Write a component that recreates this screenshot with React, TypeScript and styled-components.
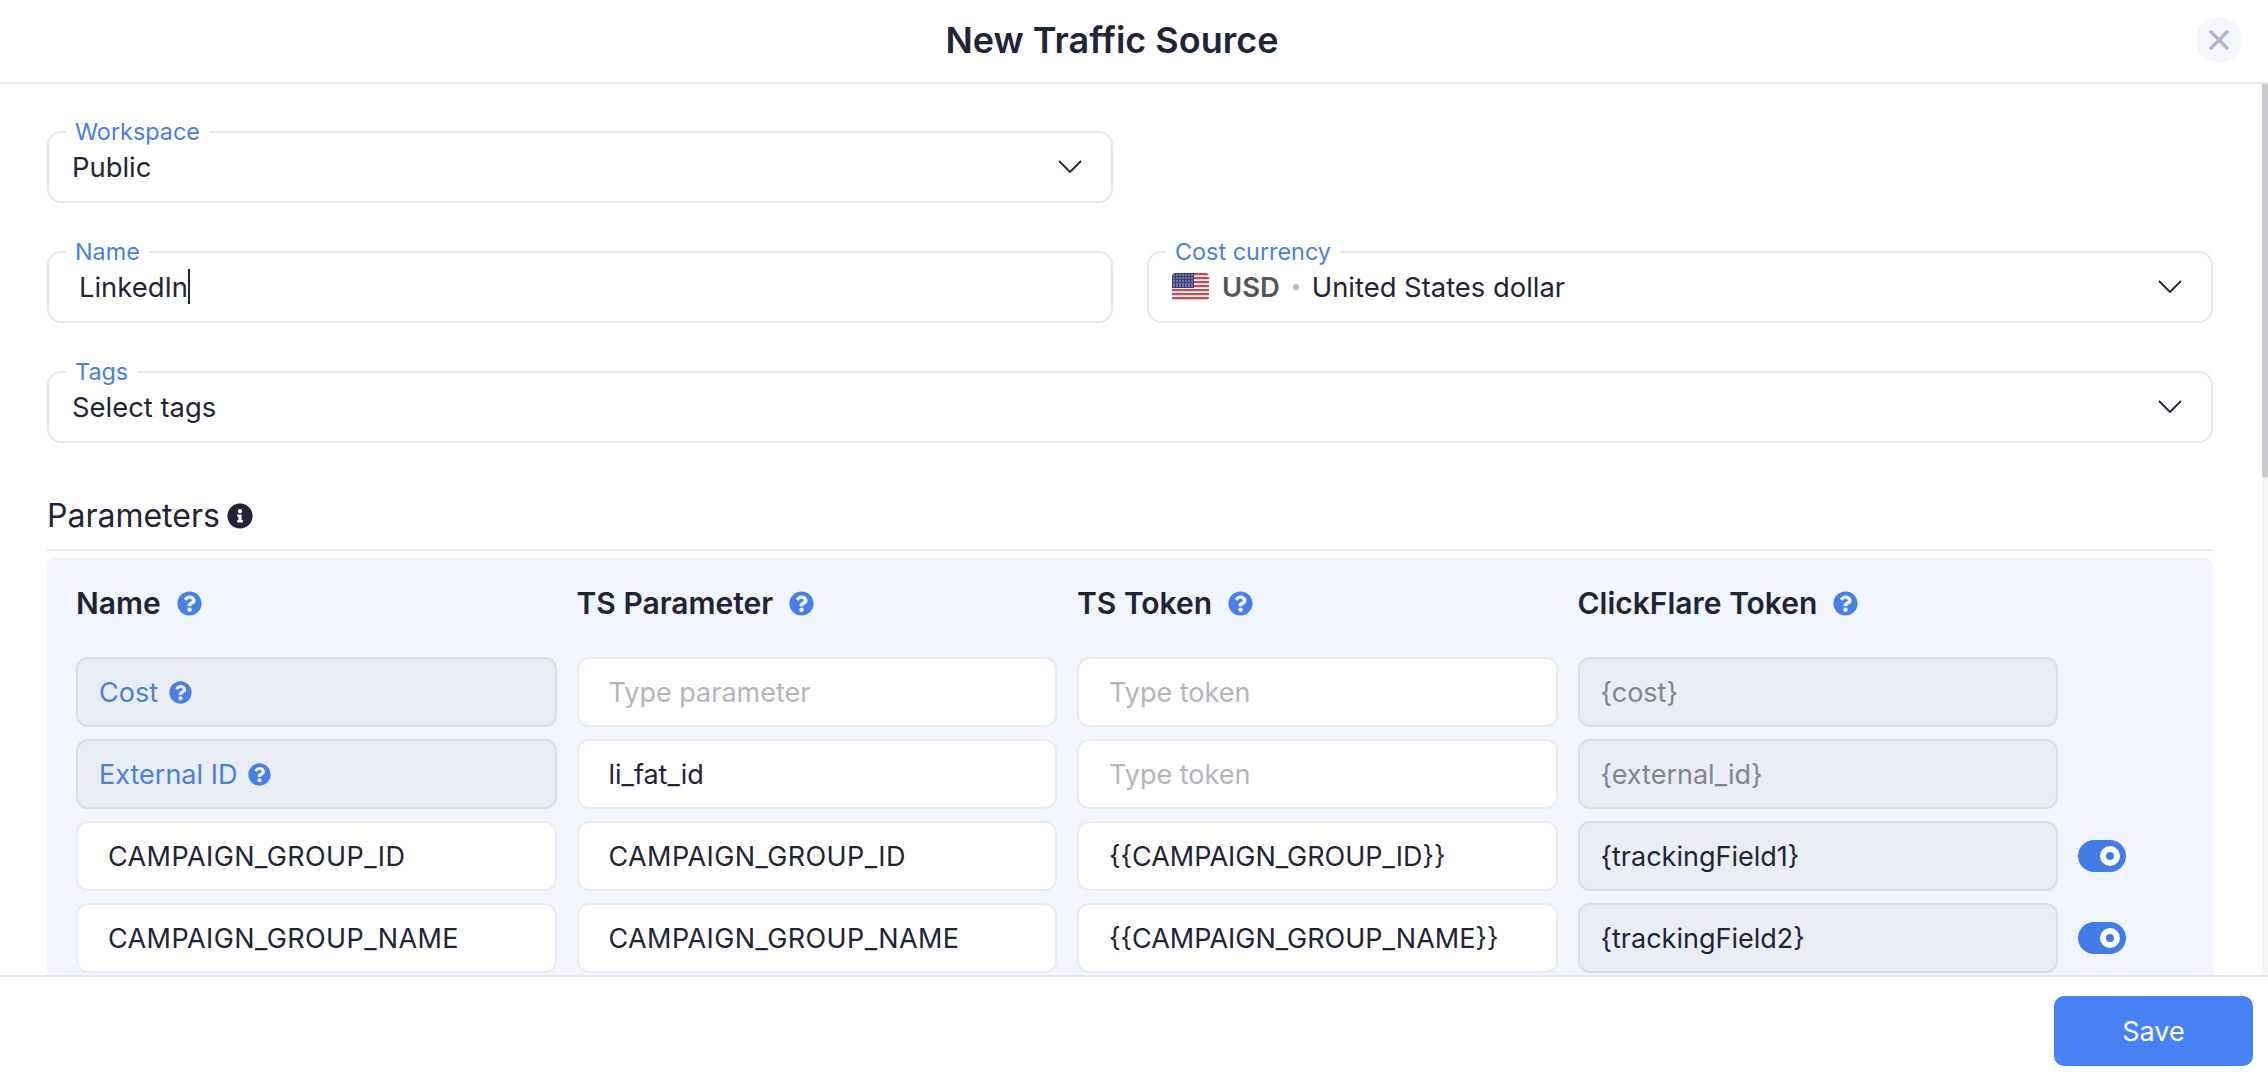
import { Fragment } from "react";
import styled, { createGlobalStyle } from "styled-components";
import { FaInfoCircle, FaQuestionCircle } from "react-icons/fa";

const GlobalStyle = createGlobalStyle`
  html, body {
    margin: 0;
    padding: 0;
    height: 100%;
    background: #fff;
    overflow: hidden;
  }
  * {
    box-sizing: border-box;
  }
  body {
    font-family: Inter, "Liberation Sans", sans-serif;
    color: #1f2437;
  }
`;

const Page = styled.div`
  height: 100vh;
  display: flex;
  flex-direction: column;
`;

const Header = styled.header`
  flex: 0 0 84px;
  position: relative;
  display: flex;
  align-items: center;
  justify-content: center;
  padding: 0 44px 2px 0;
  border-bottom: 2px solid #e6e8ec;
`;

const Title = styled.h1`
  margin: 0;
  font-size: 36px;
  font-weight: 600;
  color: #1f2437;
`;

const CloseBtn = styled.button`
  position: absolute;
  top: 17px;
  right: 26px;
  width: 46px;
  height: 46px;
  padding: 0;
  border: none;
  border-radius: 50%;
  background: #f4f6fa;
  display: flex;
  align-items: center;
  justify-content: center;
`;

const Middle = styled.div`
  flex: 1;
  min-height: 0;
  display: flex;
`;

const Content = styled.main`
  flex: 1;
  min-width: 0;
  overflow: hidden;
  padding: 37px 49px 0 47px;
`;

const ScrollTrack = styled.div`
  flex: 0 0 6px;
  background: #f3f4f6;
`;

const ScrollThumb = styled.div`
  height: 394px;
  background: #c9cbd0;
  border-radius: 0 0 4px 4px;
`;

const FormGrid = styled.div`
  display: grid;
  grid-template-columns: 1fr 1fr;
  column-gap: 34px;
  row-gap: 38px;
`;

const Field = styled.fieldset<{ $wide?: boolean }>`
  grid-column: ${(props) => (props.$wide ? "1 / -1" : "auto")};
  margin: 0;
  min-width: 0;
  height: 82px;
  padding: 0 29px 0 17px;
  border: 2px solid #e6e8ec;
  border-radius: 14px;
  display: flex;
  align-items: center;
  justify-content: space-between;
`;

const Legend = styled.legend`
  padding: 0 9px;
  font-size: 23.4px;
  line-height: 22px;
  color: #4a7fdc;
`;

const FieldValue = styled.div<{ $inset?: number }>`
  flex: 1;
  min-width: 0;
  display: flex;
  align-items: center;
  padding-left: ${(props) => props.$inset ?? 6}px;
  margin-top: -11px;
  font-size: 27.4px;
  color: #1f2437;
`;

const Caret = styled.span`
  display: inline-block;
  width: 2px;
  height: 35px;
  background: #1f2437;
`;

const Chevron = styled.svg`
  width: 24px;
  height: 13px;
  margin-top: -11px;
  flex: none;
`;

const Currency = styled.span`
  font-weight: 600;
  color: #54565d;
  margin-left: 13px;
`;

const Dot = styled.span`
  width: 6px;
  height: 6px;
  border-radius: 50%;
  background: #b4b7bc;
  margin: 0 13px;
`;

const SectionTitle = styled.div`
  margin-top: 54px;
  padding-bottom: 14px;
  border-bottom: 2px solid #e6e8ec;
  display: flex;
  align-items: center;
  gap: 7px;
  font-size: 32px;
  line-height: 38px;
  color: #1f2437;
`;

const Panel = styled.section`
  margin-top: 7px;
  padding: 22px 29px 30px;
  background: #f1f5fd;
  border-radius: 8px;
`;

const TableGrid = styled.div`
  display: grid;
  grid-template-columns: repeat(4, 480.5px) 1fr;
  column-gap: 20px;
  row-gap: 12px;
  align-items: center;
`;

const Help = styled(FaQuestionCircle)`
  color: #4a80e6;
  font-size: 23px;
  flex: none;
`;

const HeadCell = styled.div`
  height: 46px;
  margin-bottom: 19px;
  display: flex;
  align-items: center;
  gap: 16px;
  font-size: 30px;
  font-weight: 600;
  color: #1f2437;

  svg {
    font-size: 25px;
  }
`;

const Cell = styled.div<{ $tone: "edit" | "locked"; $muted?: boolean; $caps?: boolean }>`
  height: 70px;
  display: flex;
  align-items: center;
  gap: 11px;
  padding-left: ${(props) => (props.$tone === "edit" ? "30px" : "21px")};
  font-size: 27px;
  letter-spacing: ${(props) => (props.$caps ? "0.4px" : "0")};
  border-radius: 12px;
  border: 2px solid ${(props) => (props.$tone === "edit" ? "#e9ebf0" : "#d9dde6")};
  background: ${(props) => (props.$tone === "edit" ? "#fff" : "#e9edf5")};
  color: ${(props) => (props.$muted ? "#82858d" : "#1f2437")};
`;

const Placeholder = styled.span`
  color: #b3b5ba;
`;

const BlueText = styled.span`
  color: #4a7fdc;
`;

const Toggle = styled.div`
  width: 48px;
  height: 32px;
  border-radius: 16px;
  background: #447ce6;
  display: flex;
  align-items: center;
  justify-content: flex-end;
  padding-right: 6px;
`;

const Knob = styled.div`
  width: 20px;
  height: 20px;
  border-radius: 50%;
  background: #fff;
  display: flex;
  align-items: center;
  justify-content: center;

  &::after {
    content: "";
    width: 8px;
    height: 8px;
    border-radius: 50%;
    background: #447ce6;
  }
`;

const Footer = styled.footer`
  flex: 0 0 111px;
  border-top: 2px solid #e6e8ec;
  display: flex;
  justify-content: flex-end;
  padding: 19px 15px 0 0;
`;

const SaveBtn = styled.button`
  width: 199px;
  height: 70px;
  border: none;
  border-radius: 10px;
  background: #4881f3;
  color: #fff;
  font-family: inherit;
  font-size: 27px;
`;

const ChevronIcon = () => (
  <Chevron viewBox="0 0 24 13" fill="none">
    <path d="M1 1l11 11L23 1" stroke="#1f2437" strokeWidth="1.8" />
  </Chevron>
);

const UsFlag = () => (
  <svg width="37" height="28" viewBox="0 0 37 28">
    <defs>
      <clipPath id="flag-clip">
        <rect width="37" height="28" rx="4" />
      </clipPath>
    </defs>
    <g clipPath="url(#flag-clip)">
      <rect width="37" height="28" fill="#f4eeee" />
      {[0, 4, 8, 12, 16, 20, 24].map((y) => (
        <rect key={y} y={y} width="37" height="2.2" fill="#bf4f54" />
      ))}
      <rect width="22" height="15" fill="#3c3f7e" />
      {[2, 5, 8, 11, 14, 17, 20].map((x) =>
        [2, 5, 8, 11, 13].map((y) => (
          <circle key={`${x}-${y}`} cx={x} cy={y} r="0.7" fill="#d5d8ea" />
        ))
      )}
    </g>
  </svg>
);

const columns = ["Name", "TS Parameter", "TS Token", "ClickFlare Token"];

const customRows = [
  {
    name: "CAMPAIGN_GROUP_ID",
    token: "{{CAMPAIGN_GROUP_ID}}",
    field: "{trackingField1}",
  },
  {
    name: "CAMPAIGN_GROUP_NAME",
    token: "{{CAMPAIGN_GROUP_NAME}}",
    field: "{trackingField2}",
  },
];

export default function App() {
  return (
    <Page>
      <GlobalStyle />
      <Header>
        <Title>New Traffic Source</Title>
        <CloseBtn aria-label="Close">
          <svg width="20" height="20" viewBox="0 0 20 20">
            <path
              d="M2 2l16 16M18 2L2 18"
              stroke="#b0b9cb"
              strokeWidth="3.4"
              strokeLinecap="round"
            />
          </svg>
        </CloseBtn>
      </Header>
      <Middle>
        <Content>
          <FormGrid>
            <Field>
              <Legend>Workspace</Legend>
              <FieldValue>Public</FieldValue>
              <ChevronIcon />
            </Field>
            <div />
            <Field>
              <Legend>Name</Legend>
              <FieldValue $inset={13}>
                LinkedIn
                <Caret />
              </FieldValue>
            </Field>
            <Field>
              <Legend>Cost currency</Legend>
              <FieldValue>
                <UsFlag />
                <Currency>USD</Currency>
                <Dot />
                United States dollar
              </FieldValue>
              <ChevronIcon />
            </Field>
            <Field $wide>
              <Legend>Tags</Legend>
              <FieldValue>Select tags</FieldValue>
              <ChevronIcon />
            </Field>
          </FormGrid>

          <SectionTitle>
            Parameters
            <FaInfoCircle size={26} color="#1f2437" />
          </SectionTitle>

          <Panel>
            <TableGrid>
              {columns.map((col) => (
                <HeadCell key={col}>
                  {col}
                  <Help />
                </HeadCell>
              ))}
              <div />

              <Cell $tone="locked">
                <BlueText>Cost</BlueText>
                <Help />
              </Cell>
              <Cell $tone="edit">
                <Placeholder>Type parameter</Placeholder>
              </Cell>
              <Cell $tone="edit">
                <Placeholder>Type token</Placeholder>
              </Cell>
              <Cell $tone="locked" $muted>
                {"{cost}"}
              </Cell>
              <div />

              <Cell $tone="locked">
                <BlueText>External ID</BlueText>
                <Help />
              </Cell>
              <Cell $tone="edit">li_fat_id</Cell>
              <Cell $tone="edit">
                <Placeholder>Type token</Placeholder>
              </Cell>
              <Cell $tone="locked" $muted>
                {"{external_id}"}
              </Cell>
              <div />

              {customRows.map((row) => (
                <Fragment key={row.name}>
                  <Cell $tone="edit" $caps>
                    {row.name}
                  </Cell>
                  <Cell $tone="edit" $caps>
                    {row.name}
                  </Cell>
                  <Cell $tone="edit">{row.token}</Cell>
                  <Cell $tone="locked">{row.field}</Cell>
                  <Toggle>
                    <Knob />
                  </Toggle>
                </Fragment>
              ))}
            </TableGrid>
          </Panel>
        </Content>
        <ScrollTrack>
          <ScrollThumb />
        </ScrollTrack>
      </Middle>
      <Footer>
        <SaveBtn>Save</SaveBtn>
      </Footer>
    </Page>
  );
}
